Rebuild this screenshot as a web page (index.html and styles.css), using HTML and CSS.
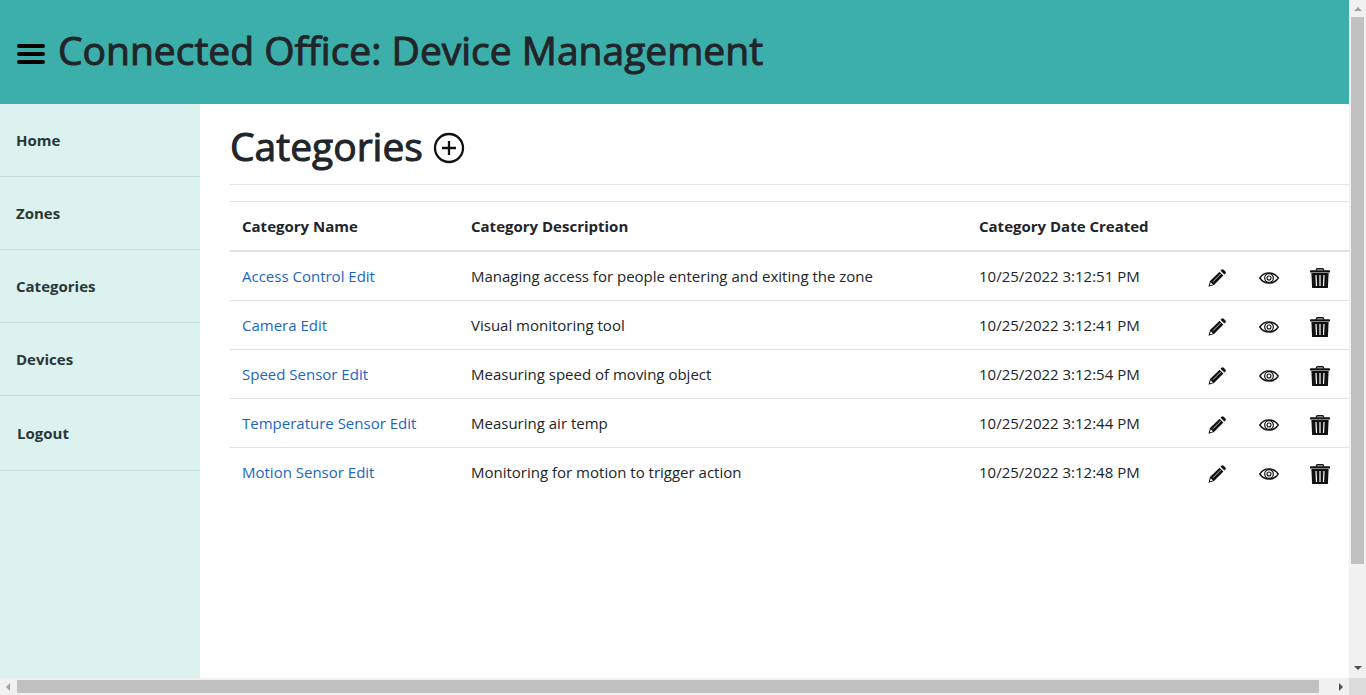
FILE: index.html
```html
<!DOCTYPE html>
<html lang="en">
<head>
<meta charset="utf-8">
<title>Connected Office: Device Management</title>
<link rel="stylesheet" href="styles.css">
</head>
<body>
<svg class="sprite" width="0" height="0" aria-hidden="true">
  <symbol id="pencil" viewBox="0 0 20 20">
    <path d="M1.500 18.700l1.500-5.700L12.600 3.700l3.800 3.800L7 17.100z" fill="#111"/>
    <path d="M13.500 2.700l1-1c.7-.7 1.500-.7 2.200 0l1.700 1.700c.7.700.7 1.500 0 2.200l-1 1z" fill="#111"/>
    <path d="M2.900 17.300l.8-3 2.300 2.200z" fill="#fff"/>
    <path d="M6 13.700l8-8" stroke="#ccc" stroke-width=".9" fill="none"/>
    <path d="M13 3.200l3.900 3.900" stroke="#fff" stroke-width=".7"/>
  </symbol>
  <symbol id="eye" viewBox="0 0 20 12">
    <path d="M.8 6C3 2.600 6.200.9 10 .9S17 2.600 19.200 6C17 9.400 13.800 11.100 10 11.100S3 9.400.8 6z" fill="none" stroke="#111" stroke-width="1.400"/>
    <circle cx="10" cy="6" r="4.300" fill="none" stroke="#111" stroke-width="1.200"/>
    <circle cx="10" cy="6" r="2" fill="none" stroke="#111" stroke-width="1.100"/>
  </symbol>
  <symbol id="trash" viewBox="0 0 20 20">
    <path d="M6.500 2.500V1.800q0-1 1-1h5q1 0 1 1v.7" fill="none" stroke="#111" stroke-width="1.400"/>
    <path d="M.8 2.300h18.400q.8 0 .8.800v1.400H0V3.100q0-.8.800-.8z" fill="#111"/>
    <path d="M1.400 5h17.200L17.900 20H2.100z" fill="#111"/>
    <path d="M6 7l.5 11M10 7v11M14 7l-.5 11" stroke="#fff" stroke-width="1.200" fill="none"/>
  </symbol>
</svg>
<div class="window">
  <div class="page">
    <header class="banner">
      <button class="menu" type="button" aria-label="Menu"><svg width="28" height="20" viewBox="0 0 28 20"><path d="M2 2h24M2 10h24M2 18h24" stroke="#000" stroke-width="4" stroke-linecap="round"/></svg></button>
      <h1>Connected Office: Device Management</h1>
    </header>
    <div class="body">
      <nav class="sidebar">
        <a href="#">Home</a>
        <a href="#">Zones</a>
        <a href="#">Categories</a>
        <a href="#">Devices</a>
        <button class="logout" type="button">Logout</button>
      </nav>
      <main class="content">
        <div class="title">
          <h1>Categories</h1>
          <a class="add" href="#" aria-label="Add category"><svg width="32" height="32" viewBox="0 0 32 32" fill="none" stroke="#111"><circle cx="16" cy="16" r="14" stroke-width="2.300"/><path d="M16 9v14M9 16h14" stroke-width="2.300"/></svg></a>
        </div>
        <table>
          <colgroup><col class="name"><col class="description"><col class="created"><col class="actions"></colgroup>
          <thead>
            <tr><th>Category Name</th><th>Category Description</th><th>Category Date Created</th><th></th></tr>
          </thead>
          <tbody>
            <tr><td><a href="#">Access Control Edit</a></td><td>Managing access for people entering and exiting the zone</td><td>10/25/2022 3:12:51 PM</td><td><div class="icons"><a href="#" aria-label="Edit"><svg width="20" height="20"><use href="#pencil"/></svg></a><a href="#" aria-label="View"><svg width="20" height="12"><use href="#eye"/></svg></a><a href="#" aria-label="Delete"><svg width="20" height="20"><use href="#trash"/></svg></a></div></td></tr>
            <tr><td><a href="#">Camera Edit</a></td><td>Visual monitoring tool</td><td>10/25/2022 3:12:41 PM</td><td><div class="icons"><a href="#" aria-label="Edit"><svg width="20" height="20"><use href="#pencil"/></svg></a><a href="#" aria-label="View"><svg width="20" height="12"><use href="#eye"/></svg></a><a href="#" aria-label="Delete"><svg width="20" height="20"><use href="#trash"/></svg></a></div></td></tr>
            <tr><td><a href="#">Speed Sensor Edit</a></td><td>Measuring speed of moving object</td><td>10/25/2022 3:12:54 PM</td><td><div class="icons"><a href="#" aria-label="Edit"><svg width="20" height="20"><use href="#pencil"/></svg></a><a href="#" aria-label="View"><svg width="20" height="12"><use href="#eye"/></svg></a><a href="#" aria-label="Delete"><svg width="20" height="20"><use href="#trash"/></svg></a></div></td></tr>
            <tr><td><a href="#">Temperature Sensor Edit</a></td><td>Measuring air temp</td><td>10/25/2022 3:12:44 PM</td><td><div class="icons"><a href="#" aria-label="Edit"><svg width="20" height="20"><use href="#pencil"/></svg></a><a href="#" aria-label="View"><svg width="20" height="12"><use href="#eye"/></svg></a><a href="#" aria-label="Delete"><svg width="20" height="20"><use href="#trash"/></svg></a></div></td></tr>
            <tr><td><a href="#">Motion Sensor Edit</a></td><td>Monitoring for motion to trigger action</td><td>10/25/2022 3:12:48 PM</td><td><div class="icons"><a href="#" aria-label="Edit"><svg width="20" height="20"><use href="#pencil"/></svg></a><a href="#" aria-label="View"><svg width="20" height="12"><use href="#eye"/></svg></a><a href="#" aria-label="Delete"><svg width="20" height="20"><use href="#trash"/></svg></a></div></td></tr>
          </tbody>
        </table>
      </main>
    </div>
  </div>
  <div class="scroll vertical" aria-hidden="true">
    <svg width="17" height="17"><path d="M5 11l4-4 4 4z" fill="#a3a3a3"/></svg>
    <div class="track"><div class="thumb"></div></div>
    <svg width="17" height="17"><path d="M5 6l4 4 4-4z" fill="#505050"/></svg>
  </div>
  <div class="scroll horizontal" aria-hidden="true">
    <svg width="17" height="17"><path d="M10 5L6 9l4 4z" fill="#a3a3a3"/></svg>
    <div class="track"><div class="thumb"></div></div>
    <svg width="17" height="17"><path d="M7 5l4 4-4 4z" fill="#505050"/></svg>
  </div>
  <div class="corner"></div>
</div>
</body>
</html>
```
FILE: styles.css
```css
* { box-sizing: border-box; }
body {
  margin: 0;
  background: #fff;
  color: #212529;
  font: 15px/24px "Segoe UI", "Open Sans", "Noto Sans", sans-serif;
}
.sprite { position: absolute; }
svg { display: block; }
.window {
  display: grid;
  grid-template: minmax(0, 1fr) 17px / minmax(0, 1fr) 17px;
  height: 100vh;
}
.page {
  display: flex;
  flex-direction: column;
  overflow: hidden;
}
h1 {
  margin: 0;
  font-size: 39px;
  font-weight: 500;
  line-height: 48px;
  -webkit-text-stroke: 1px #212529;
}
.banner {
  display: flex;
  align-items: center;
  gap: 13px;
  padding: 26px 17px 30px;
  background: #3dafaa;
}
.menu {
  padding: 8px 0 0;
  border: 0;
  background: none;
}
.body {
  display: flex;
  flex: 1;
}
.sidebar {
  width: 200px;
  flex: none;
  background: #dcf2ef;
}
.sidebar a,
.logout {
  display: block;
  width: 100%;
  padding: 24px 16px;
  border: 0;
  border-bottom: 1px solid #c3dcdd;
  background: none;
  color: #2b3638;
  font: inherit;
  font-weight: 700;
  text-align: left;
  text-decoration: none;
}
.logout { padding: 25px 17px; }
.content {
  flex: 1;
  min-width: 0;
  padding-left: 30px;
}
.title {
  display: flex;
  align-items: center;
  gap: 10px;
  padding: 18px 0 14px;
  border-bottom: 1px solid #e3e4e5;
  margin-bottom: 16px;
}
.add { padding-top: 3px; }
table {
  width: 100%;
  table-layout: fixed;
  border-collapse: separate;
  border-spacing: 0;
}
.name { width: 229px; }
.description { width: auto; }
.created { width: 228px; }
.actions { width: 154px; }
th, td {
  padding: 12px;
  border-top: 1px solid #dee2e6;
  text-align: left;
  white-space: nowrap;
}
th { font-weight: 700; }
thead th { border-bottom: 1px solid #dee2e6; height: 49px; }
td a { color: #1b66c2; text-decoration: none; }
.icons {
  display: flex;
  align-items: center;
  justify-content: space-between;
  height: 24px;
  padding: 3px 7px 0 0;
}
.scroll {
  display: flex;
  background: #f1f1f1;
}
.scroll svg { flex: none; }
.track { flex: 1; display: flex; }
.thumb { background: #c1c1c1; }
.vertical { flex-direction: column; padding-bottom: 1px; }
.vertical .track { flex-direction: column; padding: 0 2px; }
.vertical .thumb { height: 85%; }
.horizontal .track { padding: 2px 0; }
.horizontal .thumb { width: 99%; }
.corner { background: #dcdcdc; }
```
